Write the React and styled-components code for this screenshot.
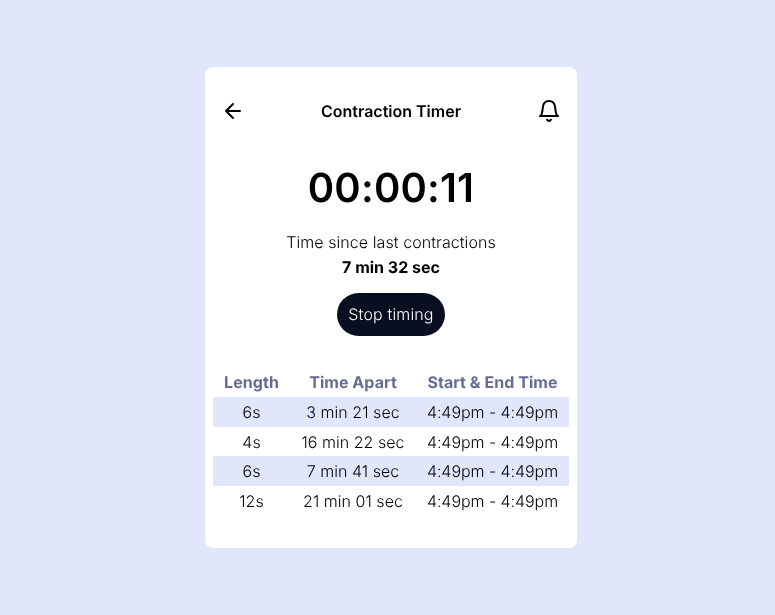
import React from "react";
import styled, { createGlobalStyle } from "styled-components";

const Global = createGlobalStyle`
  * { box-sizing: border-box; }
  body { margin: 0; background: #e1e6fa; font-family: Inter, sans-serif; color: #000; text-rendering: geometricPrecision; }
`;
const Page = styled.main`
  height: 615px;
  padding: 67px 0 0 205px;
`;
const Card = styled.section`
  width: 372px;
  height: 481px;
  padding: 30px 8px 0;
  background: #fff;
  border-radius: 8px;
  display: flex;
  flex-direction: column;
  align-items: center;
  will-change: transform;
`;
const Header = styled.header`
  width: 100%;
  height: 28px;
  padding: 0 8px;
  display: flex;
  align-items: center;
  justify-content: space-between;
`;
const Title = styled.h1`
  margin: 0;
  font-size: 16px;
  line-height: 24px;
  font-weight: 600;
`;
const IconButton = styled.button`
  display: flex;
  padding: 0;
  border: 0;
  background: none;
  color: #000;
`;
const Clock = styled.div`
  margin-top: 38px;
  font-size: 40px;
  line-height: 50px;
  font-weight: 600;
  letter-spacing: 0.2px;
`;
const Label = styled.p`
  margin: 17px 0 0;
  font-size: 16px;
  line-height: 25px;
  font-weight: 300;
  letter-spacing: 0.07px;
`;
const Since = styled.strong`
  font-size: 16px;
  line-height: 25px;
  font-weight: 700;
`;
const StopButton = styled.button`
  margin-top: 13px;
  width: 108px;
  height: 43px;
  padding: 0 0 1px;
  border: 0;
  border-radius: 22px;
  background: #0a0e21;
  color: #fff;
  font: 300 16px Inter, sans-serif;
  letter-spacing: 0.15px;
  text-rendering: inherit;
`;
const Table = styled.table`
  margin-top: 32px;
  width: 356px;
  table-layout: fixed;
  border-collapse: collapse;
  text-align: center;
  font-size: 16px;
`;
const Col = styled.col`
  width: ${(p) => p.$width}px;
`;
const Heading = styled.th`
  height: 29px;
  padding: 0 0 2px;
  font-weight: 700;
  letter-spacing: 0.05px;
  color: #666b94;
  white-space: nowrap;
`;
const Cell = styled.td`
  padding: 0;
  font-weight: 300;
  letter-spacing: ${(p) => p.$tracking || 0}px;
  white-space: nowrap;
`;
const Row = styled.tr`
  height: 29.6px;
  background: ${(p) => (p.$shaded ? "#e1e6fa" : "#fff")};

  &:nth-child(2) ${Cell} {
    padding-top: 1px;
  }
`;

const rows = [
  ["6s", "3 min 21 sec"],
  ["4s", "16 min 22 sec"],
  ["6s", "7 min 41 sec"],
  ["12s", "21 min 01 sec"],
];

const BackIcon = () => (
  <svg width="24" height="24" viewBox="0 0 24 24" fill="none" stroke="currentColor" strokeWidth="2" strokeLinecap="round" strokeLinejoin="round">
    <path d="M19 12H5M12 19l-7-7 7-7" />
  </svg>
);
const BellIcon = () => (
  <svg width="24" height="24" viewBox="0 0 24 24" fill="none" stroke="currentColor" strokeWidth="2">
    <path d="M2.2 17H21.8M3.6 17C5.2 15.2 5.4 13 5.8 8.6C6.1 4.3 8.4 2 12 2S17.9 4.3 18.2 8.6C18.6 13 18.8 15.2 20.4 17" />
    <path d="M9.8 20C10.4 22.5 13.6 22.5 14.2 20" />
  </svg>
);

export default function App() {
  return (
    <Page>
      <Global />
      <Card>
        <Header>
          <IconButton aria-label="Back"><BackIcon /></IconButton>
          <Title>Contraction Timer</Title>
          <IconButton aria-label="Notifications"><BellIcon /></IconButton>
        </Header>
        <Clock>00:00:11</Clock>
        <Label>Time since last contractions</Label>
        <Since>7 min 32 sec</Since>
        <StopButton>Stop timing</StopButton>
        <Table>
          <colgroup><Col $width={77} /><Col $width={126} /><Col $width={153} /></colgroup>
          <thead>
            <tr><Heading>Length</Heading><Heading>Time Apart</Heading><Heading>Start &amp; End Time</Heading></tr>
          </thead>
          <tbody>
            {rows.map(([length, apart], i) => (
              <Row key={apart} $shaded={i % 2 === 0}>
                <Cell>{length}</Cell><Cell $tracking={0.04}>{apart}</Cell><Cell $tracking={-0.05}>4:49pm - 4:49pm</Cell>
              </Row>
            ))}
          </tbody>
        </Table>
      </Card>
    </Page>
  );
}
